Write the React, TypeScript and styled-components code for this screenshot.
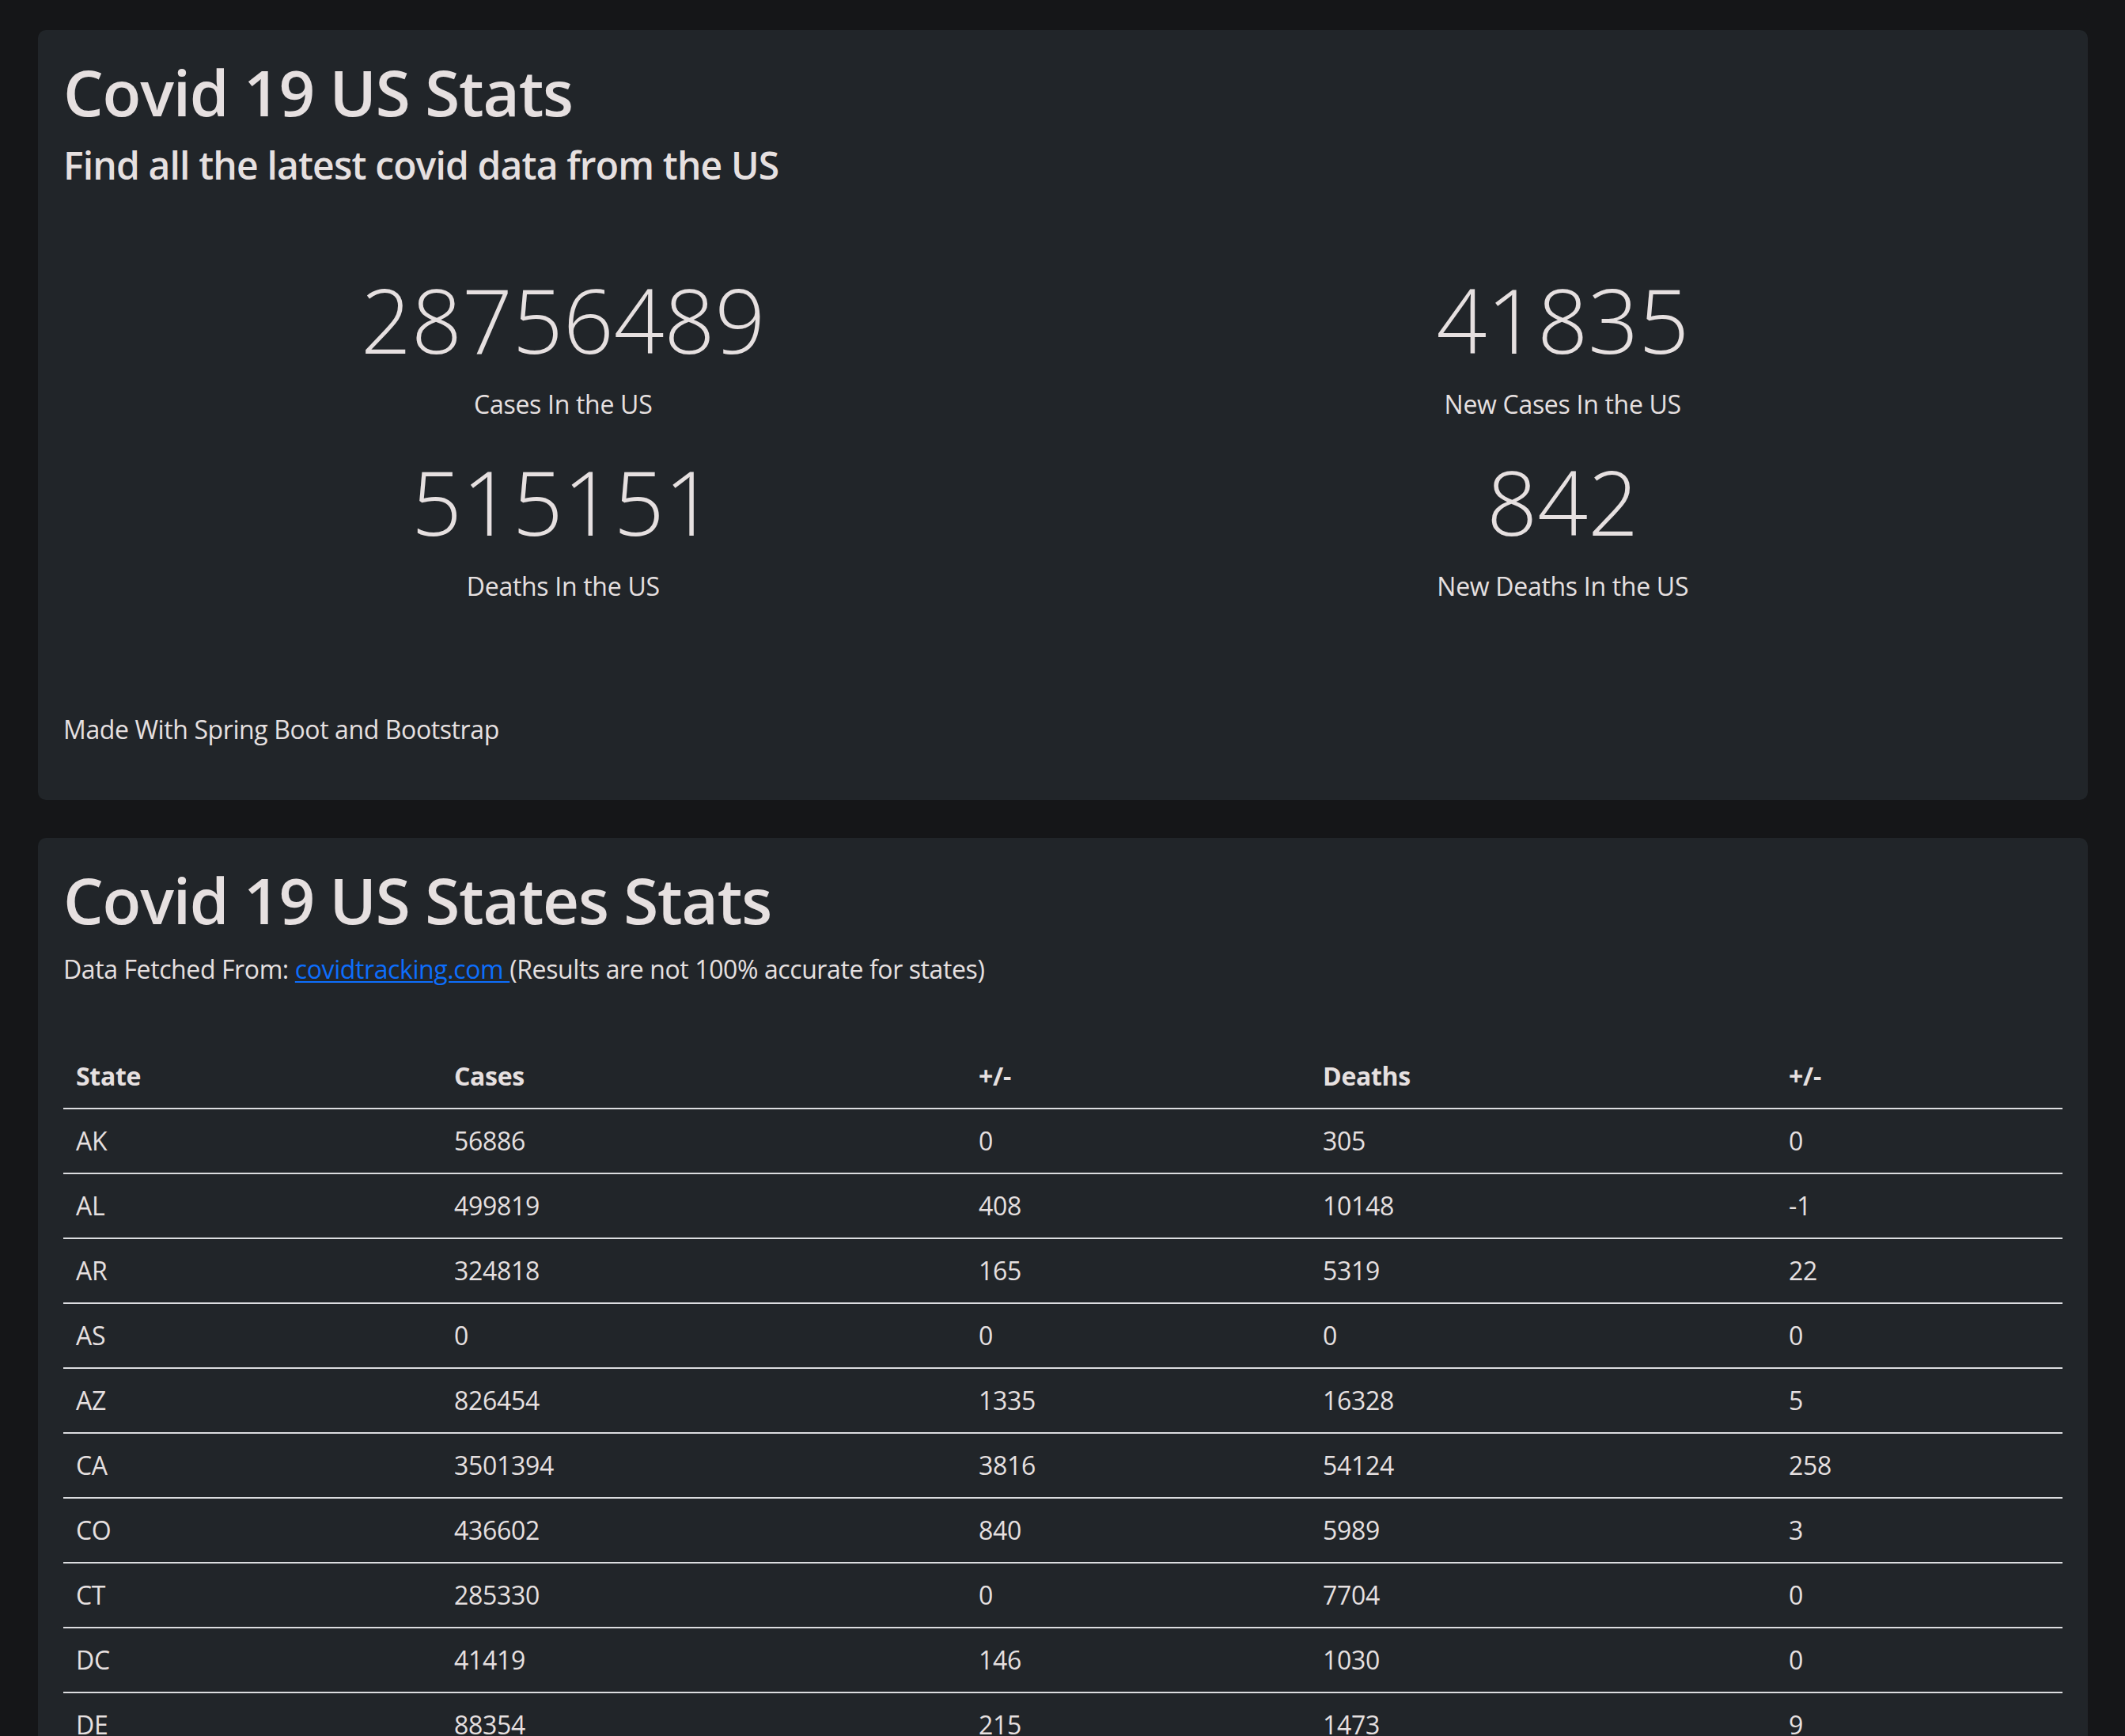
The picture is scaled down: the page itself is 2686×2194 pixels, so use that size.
import React from "react";
import styled, { createGlobalStyle } from "styled-components";

const GlobalStyle = createGlobalStyle`
  html, body {
    margin: 0;
    padding: 0;
    background: #151618;
  }
  body {
    font-family: "Open Sans", "Noto Sans", "DejaVu Sans", sans-serif;
    color: #e6e0e0;
    -webkit-font-smoothing: antialiased;
  }
  * { box-sizing: border-box; }
`;

const Page = styled.main`
  display: flex;
  flex-direction: column;
  gap: 48px;
  padding: 38px 47px 0 48px;
`;

const Card = styled.section`
  background: #212529;
  border-radius: 10px;
  padding: 30px 32px 33px;
`;

const Title = styled.h1`
  margin: 0 0 16px;
  font-size: 80px;
  line-height: 1.2;
  font-weight: 600;
  letter-spacing: -1.2px;
  color: #e6e0e0;
`;

const Subtitle = styled.h4`
  margin: 0;
  font-size: 48px;
  line-height: 1.2;
  font-weight: 600;
  letter-spacing: -0.85px;
  color: #e6e0e0;
`;

const StatGrid = styled.div`
  display: grid;
  grid-template-columns: 1fr 1fr;
  row-gap: 32px;
  margin: 99px 0 133px;
`;

const Stat = styled.div`
  display: flex;
  flex-direction: column;
  align-items: center;
  text-align: center;
`;

const StatNumber = styled.div`
  margin: 0 0 16px;
  font-size: 112px;
  line-height: 1.2;
  font-weight: 300;
`;

const StatLabel = styled.p`
  margin: 0;
  font-size: 32px;
  line-height: 1.5;
  font-weight: 400;
  letter-spacing: -0.3px;
`;

const Text = styled.p<{ $mb?: number }>`
  margin: 0 0 ${(p) => p.$mb ?? 0}px;
  font-size: 32px;
  line-height: 1.5;
  font-weight: 400;
  letter-spacing: -0.4px;
`;

const Link = styled.a`
  color: #0d6efd;
  text-decoration: underline;
  text-underline-offset: 3px;
  text-decoration-thickness: 2px;
`;

const Table = styled.table`
  width: 100%;
  margin-top: 71px;
  border-collapse: collapse;
  table-layout: fixed;
  font-size: 32px;
  line-height: 1.5;
  letter-spacing: -0.3px;
`;

const Th = styled.th<{ $w: number }>`
  width: ${(p) => p.$w}px;
  padding: 16px;
  text-align: left;
  font-weight: 700;
  border-bottom: 2px solid #dcdde0;
`;

const Td = styled.td`
  padding: 16px;
  font-weight: 400;
  border-bottom: 2px solid #dcdde0;
`;

const columns = [
  { label: "State", w: 478 },
  { label: "Cases", w: 663 },
  { label: "+/-", w: 435 },
  { label: "Deaths", w: 589 },
  { label: "+/-", w: 362 },
];

const rows: [string, number, number, number, number][] = [
  ["AK", 56886, 0, 305, 0],
  ["AL", 499819, 408, 10148, -1],
  ["AR", 324818, 165, 5319, 22],
  ["AS", 0, 0, 0, 0],
  ["AZ", 826454, 1335, 16328, 5],
  ["CA", 3501394, 3816, 54124, 258],
  ["CO", 436602, 840, 5989, 3],
  ["CT", 285330, 0, 7704, 0],
  ["DC", 41419, 146, 1030, 0],
  ["DE", 88354, 215, 1473, 9],
];

const stats = [
  { value: "28756489", label: "Cases In the US" },
  { value: "41835", label: "New Cases In the US" },
  { value: "515151", label: "Deaths In the US" },
  { value: "842", label: "New Deaths In the US" },
];

export default function App() {
  return (
    <>
      <GlobalStyle />
      <Page>
        <Card>
          <Title>Covid 19 US Stats</Title>
          <Subtitle>Find all the latest covid data from the US</Subtitle>
          <StatGrid>
            {stats.map((s) => (
              <Stat key={s.label}>
                <StatNumber>{s.value}</StatNumber>
                <StatLabel>{s.label}</StatLabel>
              </Stat>
            ))}
          </StatGrid>
          <Text $mb={32}>Made With Spring Boot and Bootstrap</Text>
        </Card>
        <Card>
          <Title>Covid 19 US States Stats</Title>
          <Text>
            Data Fetched From: <Link href="#">covidtracking.com </Link>(Results are not 100% accurate for states)
          </Text>
          <Table>
            <thead>
              <tr>
                {columns.map((c, i) => (
                  <Th key={i} $w={c.w}>
                    {c.label}
                  </Th>
                ))}
              </tr>
            </thead>
            <tbody>
              {rows.map((r) => (
                <tr key={r[0]}>
                  {r.map((v, i) => (
                    <Td key={i}>{v}</Td>
                  ))}
                </tr>
              ))}
            </tbody>
          </Table>
        </Card>
      </Page>
    </>
  );
}
